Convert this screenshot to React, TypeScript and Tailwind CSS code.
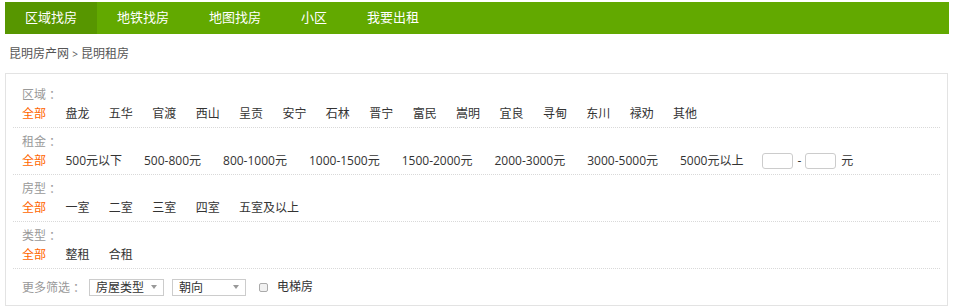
import React from "react"

const font = { fontFamily: '"Open Sans", "Noto Sans CJK SC", sans-serif' }
const cjk = { fontFamily: '"Noto Sans CJK SC", sans-serif' }

const tabs = ["区域找房", "地铁找房", "地图找房", "小区", "我要出租"]
const areas = ["盘龙", "五华", "官渡", "西山", "呈贡", "安宁", "石林", "晋宁", "富民", "嵩明", "宜良", "寻甸", "东川", "禄劝", "其他"]
const prices = ["500元以下", "500-800元", "800-1000元", "1000-1500元", "1500-2000元", "2000-3000元", "3000-5000元", "5000元以上"]
const rooms = ["一室", "二室", "三室", "四室", "五室及以上"]
const kinds = ["整租", "合租"]

// label like "区域：" with the full-width colon set apart as in the original
function Label({ text }: { text: string }) {
  return (
    <span className="text-[#999]" style={cjk} lang="zh-CN">
      {text}
      <span className="ml-[3px]">：</span>
    </span>
  )
}

function Section({ label, gap = "gap-[19.4px]", children }: { label: string; gap?: string; children: React.ReactNode }) {
  return (
    <div className="border-b border-dotted border-[#d9d9d9] px-[9px] pt-[3px] pb-[3px]">
      <div className="h-[20px] leading-[20px]">
        <Label text={label} />
      </div>
      <div className="flex h-[20px] items-center leading-[20px] text-[#333]">
        <span className="mr-[19.4px] text-[#ff6600]">全部</span>
        <div className={`flex items-center ${gap}`}>{children}</div>
      </div>
    </div>
  )
}

function Select({ text, width }: { text: string; width: string }) {
  return (
    <div className={`flex h-[17px] items-center justify-between border border-[#ccc] pl-[6px] pr-[6px] ${width}`}>
      <span className="leading-[15px] text-[#333]">{text}</span>
      <svg width="6" height="4" viewBox="0 0 6 4">
        <path d="M0 0h6L3 4z" fill="#999" />
      </svg>
    </div>
  )
}

export default function App() {
  return (
    <div className="w-[953px] bg-white px-[5px] pt-[2px] text-[12px]" style={font} lang="zh-CN">
      <div className="flex h-[32px] w-[944px] bg-[#62a900] text-[13px] text-white">
        {tabs.map((t, i) => (
          <div key={t} className={`flex items-center px-5 ${i === 0 ? "bg-[#579600]" : ""}`}>
            {t}
          </div>
        ))}
      </div>

      <div className="mt-[10px] mb-[9px] h-[20px] pl-[4px] leading-[20px] text-[#555]">
        昆明房产网 <span className="text-[10px]">&gt;</span> 昆明租房
      </div>

      <div className="w-[943px] border border-[#e3e3e3] px-[7px] pt-[7px]">
        <Section label="区域">
          {areas.map((a) => (
            <span key={a}>{a}</span>
          ))}
        </Section>
        <Section label="租金" gap="gap-[22px]">
          {prices.map((p) => (
            <span key={p}>{p}</span>
          ))}
          <div className="-ml-[3px] flex items-center gap-[4px]">
            <div className="h-[16px] w-[31px] rounded-[3px] border border-[#ccc]" />
            <span>-</span>
            <div className="h-[16px] w-[31px] rounded-[3px] border border-[#ccc]" />
            <span className="ml-[1px]">元</span>
          </div>
        </Section>
        <Section label="房型">
          {rooms.map((r) => (
            <span key={r}>{r}</span>
          ))}
        </Section>
        <Section label="类型">
          {kinds.map((k) => (
            <span key={k}>{k}</span>
          ))}
        </Section>
        <div className="flex h-[36px] items-center px-[9px]">
          <Label text="更多筛选" />
          <div className="ml-[4px]">
            <Select text="房屋类型" width="w-[75px]" />
          </div>
          <div className="ml-[8px]">
            <Select text="朝向" width="w-[74px]" />
          </div>
          <div className="ml-[13px] h-[9px] w-[9px] rounded-[2px] border border-[#aaa] bg-[#f1f1f1]" />
          <span className="ml-[9px] text-[#333]">电梯房</span>
        </div>
      </div>
    </div>
  )
}
